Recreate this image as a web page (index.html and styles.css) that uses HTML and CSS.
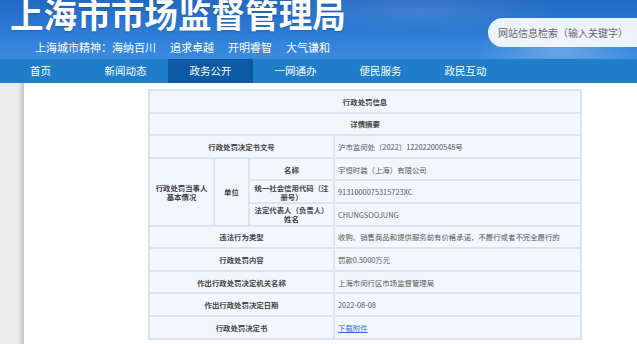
FILE: index.html
```html
<!DOCTYPE html>
<html lang="zh-CN">
<head>
<meta charset="utf-8">
<title>上海市市场监督管理局</title>
<link rel="stylesheet" href="styles.css">
</head>
<body>
<header class="header">
  <div class="brand">
    <h1 class="title">上海市市场监督管理局</h1>
    <div class="slogan">
      <span>上海城市精神：海纳百川</span>
      <span>追求卓越</span>
      <span>开明睿智</span>
      <span>大气谦和</span>
    </div>
  </div>
  <div class="search">网站信息检索（输入关键字）</div>
</header>
<nav class="nav">
  <a class="nav-item">首页</a>
  <a class="nav-item">新闻动态</a>
  <a class="nav-item active">政务公开</a>
  <a class="nav-item">一网通办</a>
  <a class="nav-item">便民服务</a>
  <a class="nav-item">政民互动</a>
</nav>
<div class="main">
  <div class="strip"></div>
  <div class="content">
    <table class="info">
      <colgroup>
        <col class="c1"><col class="c2"><col class="c3"><col class="c4">
      </colgroup>
      <tr><th colspan="4">行政处罚信息</th></tr>
      <tr><th colspan="4">详情摘要</th></tr>
      <tr><td class="lbl" colspan="3">行政处罚决定书文号</td><td class="val">沪市监闵处〔2022〕122022000548号</td></tr>
      <tr><td class="lbl" rowspan="3">行政处罚当事人基本情况</td><td class="lbl" rowspan="3">单位</td><td class="lbl">名称</td><td class="val">宇恒时装（上海）有限公司</td></tr>
      <tr><td class="lbl">统一社会信用代码（注册号）</td><td class="val">9131000075315723XC</td></tr>
      <tr><td class="lbl">法定代表人（负责人）姓名</td><td class="val">CHUNGSOOJUNG</td></tr>
      <tr><td class="lbl" colspan="3">违法行为类型</td><td class="val">收购、销售商品和提供服务前有价格承诺，不履行或者不完全履行的</td></tr>
      <tr><td class="lbl" colspan="3">行政处罚内容</td><td class="val">罚款0.5000万元</td></tr>
      <tr><td class="lbl" colspan="3">作出行政处罚决定机关名称</td><td class="val">上海市闵行区市场监督管理局</td></tr>
      <tr><td class="lbl" colspan="3">作出行政处罚决定日期</td><td class="val">2022-08-08</td></tr>
      <tr><td class="lbl" colspan="3">行政处罚决定书</td><td class="val"><a class="link">下载附件</a></td></tr>
    </table>
  </div>
</div>
</body>
</html>
```

FILE: styles.css
```css
html, body {
  margin: 0;
  padding: 0;
}
body {
  width: 637px;
  height: 344px;
  overflow: hidden;
  background: #ffffff;
  font-family: "Noto Sans CJK SC", "Noto Sans", sans-serif;
}

.header {
  height: 59px;
  display: flex;
  justify-content: space-between;
  overflow: hidden;
  background:
    radial-gradient(ellipse 120px 40px at 560px 50px, rgba(255,255,255,0.25), rgba(255,255,255,0) 70%),
    radial-gradient(ellipse 200px 30px at 420px 10px, rgba(255,255,255,0.12), rgba(255,255,255,0) 70%),
    linear-gradient(180deg, #2369c4 0%, #2d7cd6 55%, #3b8cdf 100%);
}
.brand {
  padding-left: 10px;
}
.title {
  margin: -3px 0 0;
  font-size: 33.6px;
  line-height: 34px;
  font-weight: 700;
  color: #ffffff;
  white-space: nowrap;
  text-shadow: 0 1px 2px rgba(0, 40, 100, 0.3);
}
.slogan {
  margin: 11px 0 0 25px;
  display: flex;
  gap: 14px;
  font-size: 11px;
  line-height: 11px;
  color: #ffffff;
  white-space: nowrap;
}
.search {
  margin-top: 18px;
  width: 149px;
  height: 29px;
  box-sizing: border-box;
  padding-left: 10px;
  border-radius: 15px 0 0 15px;
  background: rgba(248, 250, 252, 0.95);
  color: #666666;
  font-size: 10px;
  line-height: 29px;
  white-space: nowrap;
}

.nav {
  height: 24px;
  display: flex;
  background: #1f7dca;
  margin-left: -2px;
}
.nav-item {
  width: 85px;
  flex: none;
  text-align: center;
  color: #ffffff;
  font-size: 10.5px;
  line-height: 24px;
}
.nav-item.active {
  background: #0c5aa6;
}

.main {
  display: flex;
  height: 261px;
}
.strip {
  width: 24px;
  flex: none;
  background: linear-gradient(90deg, #ececec 0px, #ececec 18px, #d9d9d9 21px, #c4c4c4 24px);
}
.content {
  padding: 6px 0 0 124px;
}

.info {
  width: 432px;
  border-collapse: collapse;
  table-layout: fixed;
  border: 2px solid #dbe4ee;
  font-size: 7.4px;
  color: #555555;
}
.c1 { width: 65px; }
.c2 { width: 35px; }
.c3 { width: 85px; }
.c4 { width: 247px; }

.info th,
.info td {
  border: 2px solid #dbe4ee;
  background: #f2f7fd;
  height: 20.6px;
  padding: 0 4px;
  line-height: 9px;
}
.info th {
  font-weight: 700;
  color: #444444;
  text-align: center;
}
.info td.lbl {
  font-weight: 700;
  color: #444444;
  text-align: center;
}
.info td.val {
  text-align: left;
  padding-left: 3px;
}
.link {
  color: #2f6fd3;
  text-decoration: underline;
}
```
